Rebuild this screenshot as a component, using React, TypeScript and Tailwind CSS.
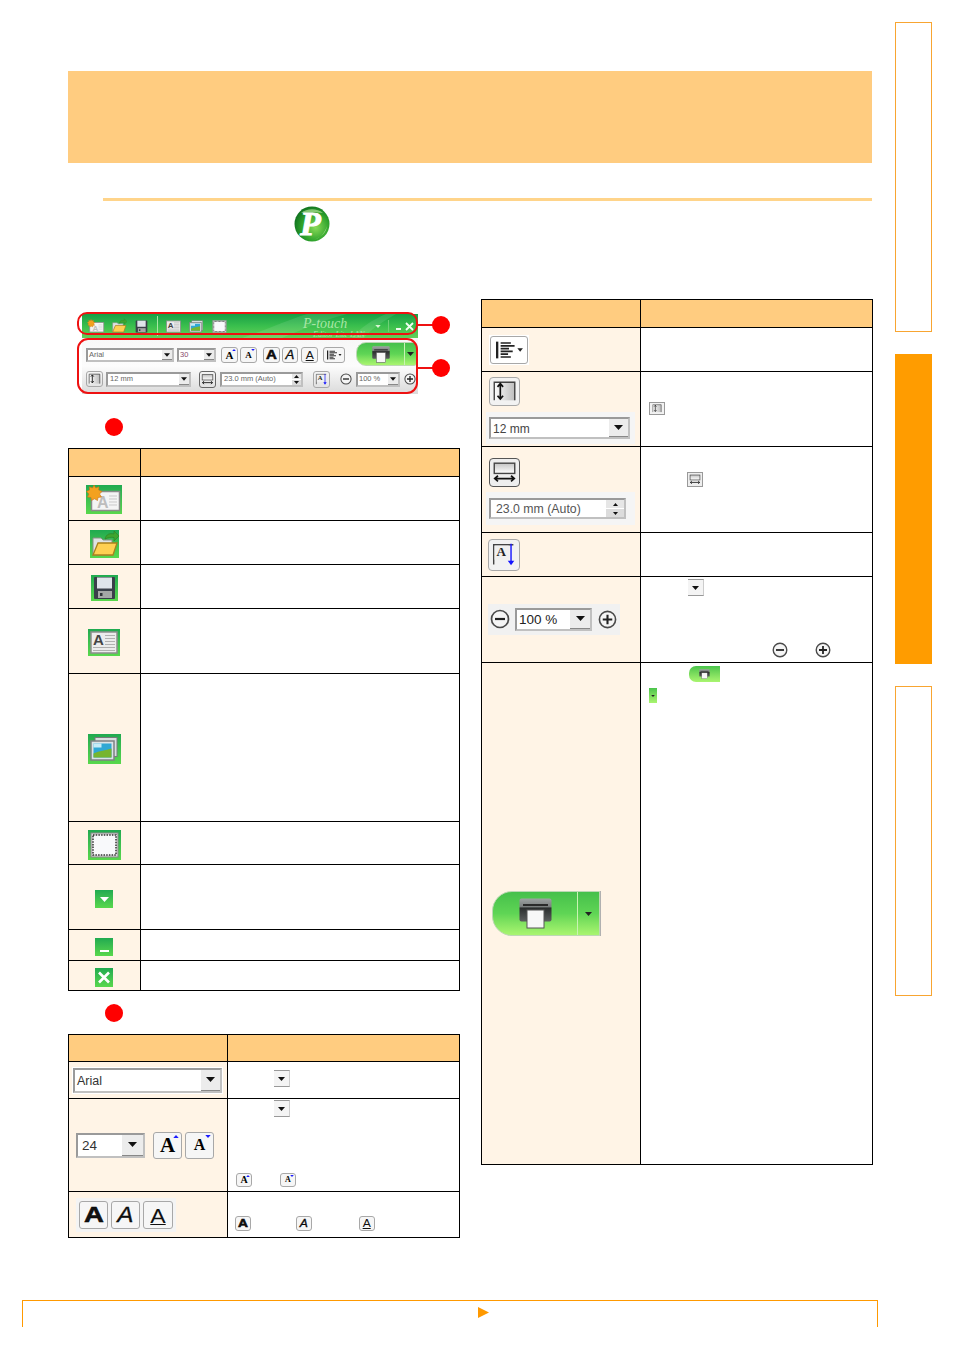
import type { ReactNode } from "react";

const tint = "bg-[#fff4e6]";
const head = "bg-[#ffcc80]";
const line = "border border-black";

function Tile({ className, children }: { className: string; children?: ReactNode }) {
  return (
    <div className={`bg-linear-to-b from-[#1faa50] to-[#58d84c] ${className}`}>{children}</div>
  );
}

function NewGlyph() {
  return (
    <svg viewBox="0 0 36 29" className="block h-full w-full">
      <rect x="5.500" y="6.500" width="28" height="19" fill="#f4f4f4" stroke="#8c8c8c" strokeWidth="1.500" />
      <text x="11" y="23" fontFamily="Liberation Sans" fontWeight="700" fontSize="16" fill="#bdbdbd">A</text>
      <path d="M23 11h8M23 14h8M23 17h8M23 20h8" stroke="#c9c9c9" />
      <polygon
        points="8,0 9.800,3 13,1.800 12.700,5 16,6.500 13.500,9 15.500,12 12,12.500 11.500,15.500 8.500,13.800 5.500,15.500 5,12.500 1.500,12 3,9 0.500,6.500 3.500,5 3.300,1.800 6.500,3"
        fill="#f3a11f"
        stroke="#c9701a"
        strokeWidth="0.600"
      />
    </svg>
  );
}

function OpenGlyph() {
  return (
    <svg viewBox="0 0 29 28" className="block h-full w-full">
      <path d="M3 25V8h8l2 2h9v15z" fill="#dfe3e3" stroke="#8a8f86" />
      <path d="M3 25L8 13h19l-4 12z" fill="#ffd052" stroke="#a9801d" strokeWidth="1.300" />
      <path d="M15 9c1-5 5-6 9-5V1l5 5-5 5V7.500c-3-.5-6 0-9 1.500z" fill="#3fa52e" stroke="#2b7d24" strokeWidth="0.600" />
    </svg>
  );
}

function SaveGlyph() {
  return (
    <svg viewBox="0 0 27 26" className="block h-full w-full">
      <rect x="3" y="2" width="21" height="22" rx="1" fill="#3a3f49" />
      <rect x="6" y="2.500" width="15" height="11" fill="#dfe4ea" />
      <rect x="7" y="16" width="14" height="7" fill="#a5a7a6" />
      <rect x="9" y="18" width="2.500" height="3" fill="#33363b" />
    </svg>
  );
}

function TextGlyph() {
  return (
    <svg viewBox="0 0 32 27" className="block h-full w-full">
      <rect x="3" y="3" width="26" height="21" fill="#ececec" stroke="#8d8d8d" strokeWidth="1.500" />
      <text x="5" y="16" fontFamily="Liberation Sans" fontWeight="700" fontSize="15" fill="#444">A</text>
      <path d="M17 6.500h10M17 9.500h10M17 12.500h10M17 15.500h10M5 18.500h22M5 21.500h22" stroke="#b0b0b0" />
    </svg>
  );
}

function ImageGlyph() {
  return (
    <svg viewBox="0 0 33 30" className="block h-full w-full">
      <rect x="7" y="3.500" width="22" height="19" fill="#d9dee0" stroke="#77797a" />
      <rect x="3" y="7" width="23" height="19" fill="#dbe3e6" stroke="#7e8182" strokeWidth="1.500" />
      <rect x="5.500" y="9.500" width="18" height="14" fill="#2fa8d4" />
      <rect x="5.500" y="9.500" width="8" height="4" fill="#c7ecf7" />
      <path d="M5.500 23.500v-4c6-3 12-3 18-5v9z" fill="#76b52f" />
    </svg>
  );
}

function FrameGlyph() {
  return (
    <svg viewBox="0 0 33 30" className="block h-full w-full">
      <rect x="3" y="3" width="27" height="24" fill="#d9d9d9" stroke="#8a8a8a" />
      <rect x="5" y="5" width="23" height="20" fill="#f8f9fb" stroke="#333" strokeWidth="1.500" strokeDasharray="1.500 1.200" />
    </svg>
  );
}

function Caret({ className = "w-[9px] h-[5px]", color = "#111" }: { className?: string; color?: string }) {
  return (
    <svg viewBox="0 0 9 5" className={`block ${className}`}>
      <polygon points="0,0 9,0 4.500,5" fill={color} />
    </svg>
  );
}

function DropButton({ className = "" }: { className?: string }) {
  return (
    <div
      className={`flex items-center justify-center border-t border-t-[#999] border-b border-b-[#999] border-r border-r-[#ccc] bg-[#f4f4f4] ${className}`}
    >
      <Caret className="h-[4px] w-[7px]" />
    </div>
  );
}

function Combo({
  text,
  className,
  textClass,
  btnClass,
  caret = "h-[5px] w-[9px]",
  spin,
}: {
  text: string;
  className: string;
  textClass: string;
  btnClass: string;
  caret?: string;
  spin?: boolean;
}) {
  return (
    <div className={`flex border-2 border-t-[#9a9a9a] border-l-[#9a9a9a] border-r-[#c0c0c0] border-b-[#c0c0c0] bg-white ${className}`}>
      <div className={`flex min-w-0 flex-1 items-center whitespace-nowrap ${textClass}`}>{text}</div>
      {spin ? (
        <div className={`flex flex-col ${btnClass}`}>
          <div className="flex flex-1 items-center justify-center bg-[#e6e6e6]">
            <Caret className="h-[3px] w-[5px] rotate-180" />
          </div>
          <div className="flex flex-1 items-center justify-center border-t border-t-white bg-[#dcdcdc]">
            <Caret className="h-[3px] w-[5px]" />
          </div>
        </div>
      ) : (
        <div className={`flex items-center justify-center border-b border-b-[#888] bg-[#ececec] ${btnClass}`}>
          <Caret className={caret} />
        </div>
      )}
    </div>
  );
}

function KeyBox({ className, children }: { className: string; children: ReactNode }) {
  return (
    <div className={`flex items-center justify-center overflow-hidden border border-[#a8a8a8] bg-[#f6f6f6] ${className}`}>
      {children}
    </div>
  );
}

function SizeA({ up, box, glyph, mark }: { up: boolean; box: string; glyph: string; mark: string }) {
  return (
    <KeyBox className={`relative rounded-[3px] ${box}`}>
      <span className={`font-['Liberation_Serif',serif] font-bold leading-none text-black ${glyph}`}>A</span>
      <span className={`absolute top-[8%] right-[8%] ${up ? "rotate-180" : ""}`}>
        <Caret className={mark} color="#1c1cff" />
      </span>
    </KeyBox>
  );
}

function StyleA({ variant, box, glyph }: { variant: "bold" | "italic" | "under"; box: string; glyph: string }) {
  const cls =
    variant === "bold"
      ? "font-bold scale-x-[1.25] [-webkit-text-stroke:0.5px_black]"
      : variant === "italic"
        ? "italic scale-x-[1.1] [-webkit-text-stroke:0.3px_black]"
        : "underline decoration-1 underline-offset-[1px] scale-x-[1.1]";
  return (
    <KeyBox className={`rounded-[3px] ${box}`}>
      <span className={`inline-block leading-none text-[#111] ${cls} ${glyph}`}>A</span>
    </KeyBox>
  );
}

function AlignGlyph() {
  return (
    <svg viewBox="0 0 38 28" className="block h-full w-full">
      <rect x="5" y="5" width="2.500" height="18" fill="#222" />
      <path d="M10 6.500h11M10 9.500h15M10 12.500h9M10 15.500h13M10 18.500h8M10 21.500h11" stroke="#222" strokeWidth="1.800" />
      <polygon points="28,12 34,12 31,16" fill="#222" />
    </svg>
  );
}

function HeightGlyph() {
  return (
    <svg viewBox="0 0 31 29" className="block h-full w-full">
      <defs>
        <linearGradient id="hg" x1="0" x2="1" y1="0" y2="0">
          <stop offset="0" stopColor="#ffffff" />
          <stop offset="1" stopColor="#bcbcbc" />
        </linearGradient>
      </defs>
      <rect x="4" y="4" width="23" height="20" fill="url(#hg)" />
      <path d="M4.500 24V4.500h22V24" fill="none" stroke="#444" strokeWidth="1.500" />
      <path d="M11 6.500v15.500M8 9.500l3-3.500 3 3.500M8 19l3 3.500 3-3.500" fill="none" stroke="#111" strokeWidth="1.800" />
    </svg>
  );
}

function WidthGlyph() {
  return (
    <svg viewBox="0 0 31 29" className="block h-full w-full">
      <defs>
        <linearGradient id="wg" x1="0" x2="0" y1="0" y2="1">
          <stop offset="0" stopColor="#c4c4c4" />
          <stop offset="1" stopColor="#ffffff" />
        </linearGradient>
      </defs>
      <rect x="4.500" y="4.500" width="22" height="11" fill="url(#wg)" stroke="#444" strokeWidth="1.500" />
      <path d="M5.500 21h20M8.500 18l-3.500 3 3.500 3M22.500 18l3.500 3-3.500 3" fill="none" stroke="#111" strokeWidth="1.800" />
    </svg>
  );
}

function VerticalGlyph() {
  return (
    <svg viewBox="0 0 32 32" className="block h-full w-full">
      <path d="M5 26V5h21" fill="none" stroke="#444" strokeWidth="1.500" />
      <rect x="6" y="6" width="15" height="15" fill="#f0f0f0" />
      <text x="8" y="17" fontFamily="Liberation Serif" fontWeight="700" fontSize="14" fill="#222">A</text>
      <path d="M23.500 4v20" stroke="#1414ff" strokeWidth="1.500" />
      <polygon points="20,22 27,22 23.500,27" fill="#1414ff" />
    </svg>
  );
}

function ZoomCircle({ plus, className }: { plus?: boolean; className: string }) {
  return (
    <svg viewBox="0 0 20 20" className={`block ${className}`}>
      <circle cx="10" cy="10" r="8.500" fill="#f5f5f5" stroke="#4a4a4a" strokeWidth="1.700" />
      <path d={plus ? "M5 10h10M10 5v10" : "M5 10h10"} stroke="#222" strokeWidth="2.200" />
    </svg>
  );
}

function Printer({ className }: { className: string }) {
  return (
    <svg viewBox="0 0 33 31" className={`block ${className}`}>
      <defs>
        <linearGradient id="pr" x1="0" x2="0" y1="0" y2="1">
          <stop offset="0" stopColor="#9ea3a3" />
          <stop offset="0.350" stopColor="#7a7e7e" />
          <stop offset="0.420" stopColor="#2b2e2e" />
          <stop offset="1" stopColor="#5b5e5e" />
        </linearGradient>
      </defs>
      <rect x="0.500" y="0.500" width="32" height="23" rx="2" fill="url(#pr)" />
      <rect x="4" y="6" width="25" height="2" fill="#2a2a2a" />
      <rect x="8" y="12" width="17" height="18" fill="#f7f7f7" stroke="#555" />
    </svg>
  );
}

function PrintButton({
  className,
  round,
  sideClass,
  printer,
}: {
  className: string;
  round: string;
  sideClass: string;
  printer: string;
}) {
  return (
    <div className={`flex overflow-hidden border border-[#bcd8b4] bg-linear-to-b from-[#45c04b] via-[#5fd555] to-[#a9f570] ${round} ${className}`}>
      <div className="flex flex-1 items-center justify-center">
        <Printer className={printer} />
      </div>
      <div className={`flex items-center justify-center border-l border-l-[#c9f3b3] ${sideClass}`}>
        <Caret className="h-[4px] w-[7px]" color="#222" />
      </div>
    </div>
  );
}

function Logo() {
  return (
    <svg viewBox="0 0 36 36" className="block h-[36px] w-[36px]">
      <defs>
        <radialGradient id="lg" cx="0.6" cy="0.6" r="0.65">
          <stop offset="0" stopColor="#8ada58" />
          <stop offset="0.6" stopColor="#2ea32c" />
          <stop offset="1" stopColor="#0e6f1f" />
        </radialGradient>
      </defs>
      <circle cx="18" cy="18" r="17.500" fill="url(#lg)" />
      <path d="M7 7c6-5 16-5 22 0-6-1-15-1-22 0z" fill="#c8eea8" opacity="0.6" />
      <path d="M20 34c6-2 11-7 13-14-1 7-6 11-13 14z" fill="#d6f5b8" opacity="0.7" />
      <text
        x="6"
        y="29"
        fontFamily="Liberation Serif"
        fontStyle="italic"
        fontWeight="700"
        fontSize="34"
        fill="#ffffff"
        stroke="#ffffff"
        strokeWidth="1"
      >
        P
      </text>
    </svg>
  );
}

function Toolbar() {
  const small = "text-[7.5px] text-[#666]";
  const tiny = "h-[4px] w-[6px]";
  return (
    <div className="relative ml-[9px] h-[82px] w-[341px]">
      <div className="ml-[5px] flex h-[82px] w-[336px] flex-col pt-[2px]">
        <div className="relative flex h-[24px] items-center overflow-hidden bg-linear-to-b from-[#159f46] via-[#39bf4d] to-[#62cf59] pl-[5px]">
          <svg viewBox="0 0 336 24" className="absolute inset-0 h-full w-full">
            <path d="M160 24C190 14 205 6 225 0h40c-30 8-50 18-65 24z" fill="#ffffff" opacity="0.1" />
            <path d="M270 24c8-10 20-18 34-24h10c-14 8-26 16-32 24z" fill="#ffffff" opacity="0.1" />
          </svg>
          <div className="relative h-[15px] w-[18px]"><NewGlyph /></div>
          <div className="relative ml-[6px] h-[16px] w-[16px]"><OpenGlyph /></div>
          <div className="relative ml-[7px] h-[15px] w-[15px]"><SaveGlyph /></div>
          <div className="relative ml-[8px] h-[20px] w-px bg-[#a9e6a5]" />
          <div className="relative ml-[7px] h-[15px] w-[17px]"><TextGlyph /></div>
          <div className="relative ml-[6px] h-[15px] w-[17px]"><ImageGlyph /></div>
          <div className="relative ml-[6px] h-[15px] w-[17px]"><FrameGlyph /></div>
          <div className="relative ml-[75px] mt-[3px] w-[60px] font-['Liberation_Serif',serif] text-[14px] leading-[13px] whitespace-nowrap text-[#a9e6a5] italic">
            P-touch
            <div className="ml-[10px] text-[8px] leading-[9px]">Editor Lite LAN</div>
          </div>
          <Caret className="relative ml-[12px] h-[3px] w-[6px]" color="#d8f5d4" />
          <div className="relative ml-[7px] h-[12px] w-px bg-[#6fd077]" />
          <div className="relative ml-[7px] mt-[5px] h-[2px] w-[5px] bg-[#eefbee]" />
          <svg viewBox="0 0 9 9" className="relative ml-[4px] h-[9px] w-[9px]">
            <path d="M1 1l7 7M8 1l-7 7" stroke="#f2fff2" strokeWidth="1.800" />
          </svg>
        </div>
        <div className="flex flex-1 flex-col bg-linear-to-b from-[#f7f7f7] via-[#fcfcfc] to-[#dadada] pl-[4px]">
          <div className="mt-[5px] flex h-[24px] items-center">
            <Combo text="Arial" className="h-[14px] w-[88px]" textClass={`${small} pl-[1px]`} btnClass="w-[10px]" caret={tiny} />
            <Combo text="30" className="ml-[3px] h-[14px] w-[39px]" textClass="pl-[1px] text-[7.5px] text-[#8a4a6a]" btnClass="w-[10px]" caret={tiny} />
            <SizeA up box="ml-[5px] h-[16px] w-[17px]" glyph="text-[11px]" mark="h-[2px] w-[4px]" />
            <SizeA up={false} box="ml-[2px] h-[16px] w-[17px]" glyph="text-[9px]" mark="h-[2px] w-[4px]" />
            <StyleA variant="bold" box="ml-[6px] h-[16px] w-[17px]" glyph="text-[12px]" />
            <StyleA variant="italic" box="ml-[2px] h-[16px] w-[16px]" glyph="text-[12px]" />
            <StyleA variant="under" box="ml-[3px] h-[16px] w-[17px]" glyph="text-[11px]" />
            <div className="ml-[5px] h-[16px] w-[22px] rounded-[3px] border border-[#a8a8a8] bg-[#f6f6f6]"><AlignGlyph /></div>
            <PrintButton
              className="-mt-[1px] ml-[11px] h-[24px] w-[61px] self-start"
              round="rounded-l-[10px] rounded-r-[3px]"
              sideClass="w-[12px]"
              printer="h-[17px] w-[18px]"
            />
          </div>
          <div className="mt-[4px] flex h-[16px] items-center">
            <div className="h-[16px] w-[17px] rounded-[3px] border border-[#a8a8a8]"><HeightGlyph /></div>
            <Combo text="12 mm" className="ml-[3px] h-[15px] w-[85px]" textClass={`${small} pl-[2px]`} btnClass="w-[10px]" caret={tiny} />
            <div className="ml-[8px] h-[17px] w-[17px] rounded-[3px] border border-[#666]"><WidthGlyph /></div>
            <Combo text="23.0 mm (Auto)" className="ml-[4px] h-[15px] w-[83px]" textClass={`${small} pl-[2px]`} btnClass="w-[9px]" spin />
            <div className="ml-[10px] h-[17px] w-[17px] rounded-[3px] border border-[#a8a8a8]"><VerticalGlyph /></div>
            <ZoomCircle className="ml-[10px] h-[12px] w-[12px]" />
            <Combo text="100 %" className="ml-[4px] h-[15px] w-[44px]" textClass={`${small} pl-[1px]`} btnClass="w-[10px]" caret={tiny} />
            <ZoomCircle plus className="ml-[4px] h-[12px] w-[12px]" />
          </div>
        </div>
      </div>
      <div className="absolute top-0 left-0 h-[23px] w-[341px] rounded-[10px] border-2 border-[#ee1111]" />
      <div className="absolute top-[26px] left-0 h-[56px] w-[341px] rounded-[11px] border-2 border-[#ee1111]" />
      <div className="absolute top-[12px] left-[341px] h-[2px] w-[16px] bg-[#ee1111]" />
      <div className="absolute top-[55px] left-[341px] h-[2px] w-[16px] bg-[#ee1111]" />
      <div className="absolute top-[4px] left-[355px] h-[18px] w-[18px] rounded-full bg-[#ff0000]" />
      <div className="absolute top-[47px] left-[355px] h-[18px] w-[18px] rounded-full bg-[#ff0000]" />
    </div>
  );
}

function RedDot({ className }: { className: string }) {
  return <div className={`ml-[37px] h-[18px] w-[18px] rounded-full bg-[#ff0000] ${className}`} />;
}

function IconRow({ height, shift = "pt-[2px] pr-[1px]", children }: { height: string; shift?: string; children: ReactNode }) {
  return (
    <tr className={height}>
      <td className={`${line} ${tint} p-0`}>
        <div className={`flex justify-center ${shift}`}>{children}</div>
      </td>
      <td className={`${line} bg-white p-0`} />
    </tr>
  );
}

function HeadRow({ height }: { height: string }) {
  return (
    <tr className={height}>
      <td className={`${line} ${head} p-0`} />
      <td className={`${line} ${head} p-0`} />
    </tr>
  );
}

function ToolbarTable() {
  const low = "pt-[4px] pr-[1px]";
  return (
    <table className="mt-[12px] w-[391px] table-fixed border-collapse">
      <colgroup>
        <col className="w-[72px]" />
        <col className="w-[319px]" />
      </colgroup>
      <tbody>
        <HeadRow height="h-[28px]" />
        <IconRow height="h-[44px]"><Tile className="h-[29px] w-[36px]"><NewGlyph /></Tile></IconRow>
        <IconRow height="h-[44px]"><Tile className="h-[28px] w-[29px]"><OpenGlyph /></Tile></IconRow>
        <IconRow height="h-[44px]"><Tile className="h-[26px] w-[27px]"><SaveGlyph /></Tile></IconRow>
        <IconRow height="h-[65px]"><Tile className="h-[27px] w-[32px]"><TextGlyph /></Tile></IconRow>
        <IconRow height="h-[148px]"><Tile className="h-[30px] w-[33px]"><ImageGlyph /></Tile></IconRow>
        <IconRow height="h-[43px]" shift={low}><Tile className="h-[30px] w-[33px]"><FrameGlyph /></Tile></IconRow>
        <IconRow height="h-[65px]" shift={low}>
          <Tile className="flex h-[18px] w-[18px] items-center justify-center">
            <Caret className="h-[5px] w-[9px]" color="#fff" />
          </Tile>
        </IconRow>
        <IconRow height="h-[31px]" shift={low}>
          <Tile className="flex h-[18px] w-[18px] items-end justify-center pb-[4px]">
            <div className="h-[2px] w-[9px] bg-white" />
          </Tile>
        </IconRow>
        <IconRow height="h-[30px]" shift={low}>
          <Tile className="h-[19px] w-[18px]">
            <svg viewBox="0 0 18 19" className="block h-full w-full">
              <path d="M4 4.500l10 10M14 4.500l-10 10" stroke="#fff" strokeWidth="2.600" />
            </svg>
          </Tile>
        </IconRow>
      </tbody>
    </table>
  );
}

function FontTable() {
  return (
    <table className="mt-[12px] w-[391px] table-fixed border-collapse">
      <colgroup>
        <col className="w-[159px]" />
        <col className="w-[232px]" />
      </colgroup>
      <tbody>
        <HeadRow height="h-[27px]" />
        <tr className="h-[37px]">
          <td className={`${line} ${tint} p-0`}>
            <div className="ml-[3px] w-[151px] bg-white p-[1px]">
              <Combo text="Arial" className="h-[25px] w-[149px]" textClass="pt-[2px] pl-[2px] text-[12.5px] text-[#333]" btnClass="w-[19px]" />
            </div>
          </td>
          <td className={`${line} bg-white p-0 align-top`}>
            <DropButton className="mt-[8px] ml-[46px] h-[17px] w-[16px]" />
          </td>
        </tr>
        <tr className="h-[93px]">
          <td className={`${line} ${tint} p-0`}>
            <div className="ml-[7px] flex items-center">
              <Combo text="24" className="h-[25px] w-[69px]" textClass="pt-[2px] pl-[4px] text-[13.5px] text-[#333]" btnClass="w-[21px]" />
              <SizeA up box="ml-[8px] h-[27px] w-[29px]" glyph="text-[21px]" mark="h-[3px] w-[6px]" />
              <SizeA up={false} box="ml-[3px] h-[27px] w-[29px]" glyph="text-[16px]" mark="h-[3px] w-[6px]" />
            </div>
          </td>
          <td className={`${line} bg-white p-0 align-top`}>
            <DropButton className="mt-[1px] ml-[46px] h-[17px] w-[16px]" />
            <div className="mt-[56px] ml-[8px] flex">
              <SizeA up box="h-[14px] w-[16px] rounded-[1px]" glyph="text-[10px]" mark="h-[2px] w-[4px]" />
              <SizeA up={false} box="ml-[28px] h-[14px] w-[16px] rounded-[1px]" glyph="text-[8px]" mark="h-[2px] w-[4px]" />
            </div>
          </td>
        </tr>
        <tr className="h-[46px]">
          <td className={`${line} ${tint} p-0`}>
            <div className="mt-[1px] ml-[7px] flex w-[100px] gap-[3px] bg-[#f4f4f4] py-[3px] pl-[3px]">
              <StyleA variant="bold" box="h-[28px] w-[29px]" glyph="text-[22px]" />
              <StyleA variant="italic" box="h-[28px] w-[29px]" glyph="text-[22px]" />
              <StyleA variant="under" box="h-[28px] w-[30px]" glyph="text-[21px]" />
            </div>
          </td>
          <td className={`${line} bg-white p-0 align-top`}>
            <div className="mt-[24px] ml-[7px] flex">
              <StyleA variant="bold" box="h-[15px] w-[16px]" glyph="text-[11px]" />
              <StyleA variant="italic" box="ml-[45px] h-[15px] w-[16px]" glyph="text-[11px]" />
              <StyleA variant="under" box="ml-[47px] h-[15px] w-[16px]" glyph="text-[11px]" />
            </div>
          </td>
        </tr>
      </tbody>
    </table>
  );
}

function OptionsTable() {
  return (
    <table className="w-[391px] table-fixed border-collapse">
      <colgroup>
        <col className="w-[159px]" />
        <col className="w-[232px]" />
      </colgroup>
      <tbody>
        <HeadRow height="h-[28px]" />
        <tr className="h-[44px]">
          <td className={`${line} ${tint} p-0`}>
            <div className="ml-[7px] h-[30px] w-[40px] bg-white p-[1px]">
              <div className="h-[28px] w-[38px] rounded-[3px] border border-[#a8a8a8]"><AlignGlyph /></div>
            </div>
          </td>
          <td className={`${line} bg-white p-0`} />
        </tr>
        <tr className="h-[75px]">
          <td className={`${line} ${tint} p-0 align-top`}>
            <div className="mt-[5px] ml-[7px] h-[29px] w-[31px] rounded-[4px] border border-[#a8a8a8] bg-[#f2f2f2]"><HeightGlyph /></div>
            <div className="mt-[6px] ml-[4px] w-[149px] bg-[#f5f5f5] px-[3px] py-[5px]">
              <Combo text="12 mm" className="h-[22px] w-[141px]" textClass="pt-[2px] pl-[2px] text-[12px] text-[#444]" btnClass="w-[19px]" />
            </div>
          </td>
          <td className={`${line} bg-white p-0 align-top`}>
            <div className="mt-[30px] ml-[8px] h-[13px] w-[16px] border border-[#999] bg-[#f2f2f2]"><HeightGlyph /></div>
          </td>
        </tr>
        <tr className="h-[86px]">
          <td className={`${line} ${tint} p-0 align-top`}>
            <div className="mt-[11px] ml-[7px] h-[29px] w-[31px] rounded-[4px] border border-[#555] bg-[#eee]"><WidthGlyph /></div>
            <div className="mt-[5px] ml-[4px] w-[149px] bg-[#f5f5f5] px-[3px] py-[6px]">
              <Combo text="23.0 mm (Auto)" className="h-[21px] w-[137px]" textClass="pt-[2px] pl-[5px] text-[12.3px] text-[#555]" btnClass="w-[18px]" spin />
            </div>
          </td>
          <td className={`${line} bg-white p-0 align-top`}>
            <div className="mt-[25px] ml-[46px] h-[15px] w-[16px] border border-[#999] bg-[#eee]"><WidthGlyph /></div>
          </td>
        </tr>
        <tr className="h-[44px]">
          <td className={`${line} ${tint} p-0`}>
            <div className="ml-[6px] h-[32px] w-[32px] rounded-[4px] border border-[#a8a8a8] bg-[#f2f2f2]"><VerticalGlyph /></div>
          </td>
          <td className={`${line} bg-white p-0`} />
        </tr>
        <tr className="h-[86px]">
          <td className={`${line} ${tint} p-0`}>
            <div className="mb-[1px] ml-[6px] flex h-[31px] w-[132px] items-center bg-[#f1f1f1] pl-[2px]">
              <ZoomCircle className="h-[20px] w-[20px]" />
              <Combo text="100 %" className="ml-[5px] h-[23px] w-[77px]" textClass="pt-[2px] pl-[2px] text-[13.5px] text-[#222]" btnClass="w-[20px]" />
              <ZoomCircle plus className="ml-[6px] h-[19px] w-[19px]" />
            </div>
          </td>
          <td className={`${line} bg-white p-0 align-top`}>
            <DropButton className="mt-[2px] ml-[47px] h-[17px] w-[16px]" />
            <div className="mt-[46px] ml-[131px] flex">
              <ZoomCircle className="h-[16px] w-[16px]" />
              <ZoomCircle plus className="ml-[27px] h-[16px] w-[16px]" />
            </div>
          </td>
        </tr>
        <tr className="h-[502px]">
          <td className={`${line} ${tint} p-0`}>
            <div className="ml-[10px] flex h-[45px] w-[109px]">
              <PrintButton
                className="h-[45px] w-[108px]"
                round="rounded-l-[20px]"
                sideClass="w-[22px]"
                printer="h-[31px] w-[33px]"
              />
              <div className="w-px bg-[#b0b0b0]" />
            </div>
          </td>
          <td className={`${line} bg-white p-0 align-top`}>
            <div className="mt-[3px] ml-[48px] flex h-[16px] w-[31px] items-center justify-center rounded-l-[7px] bg-linear-to-b from-[#49c44c] to-[#a9f570]">
              <Printer className="h-[10px] w-[11px]" />
            </div>
            <div className="mt-[6px] ml-[8px] flex h-[15px] w-[8px] items-center justify-center bg-linear-to-b from-[#49c44c] to-[#a9f570]">
              <Caret className="h-[2px] w-[4px]" color="#222" />
            </div>
          </td>
        </tr>
      </tbody>
    </table>
  );
}

export default function App() {
  return (
    <div className="flex min-h-[1350px] w-[954px] flex-col bg-white font-['Liberation_Sans',Arial,sans-serif]">
      <div className="flex">
        <main className="ml-[68px] w-[805px] pt-[71px]">
          <div className={`h-[92px] w-[804px] ${head}`} />
          <div className="mt-[35px] ml-[35px] h-[3px] w-[769px] bg-[#ffd48a]" />
          <div className="mt-[5px] ml-[226px]">
            <Logo />
          </div>
          <div className="mt-[57px] flex gap-[21px]">
            <section className="w-[392px] pt-[13px]">
              <Toolbar />
              <RedDot className="mt-[24px]" />
              <ToolbarTable />
              <RedDot className="mt-[13px]" />
              <FontTable />
            </section>
            <section className="w-[392px]">
              <OptionsTable />
            </section>
          </div>
        </main>
        <aside className="ml-[22px] flex w-[37px] flex-col gap-[22px] pt-[22px]">
          <div className="h-[310px] border border-[#f8a531] bg-white" />
          <div className="h-[310px] bg-[#ff9c00]" />
          <div className="h-[310px] border border-[#f8a531] bg-white" />
        </aside>
      </div>
      <footer className="mt-[62px] ml-[22px] h-[27px] w-[856px] border-x border-t border-[#ff9900] pt-[6px] pl-[455px]">
        <svg viewBox="0 0 11 11" className="block h-[11px] w-[11px]">
          <polygon points="0,0 11,5.500 0,11" fill="#ff9900" />
        </svg>
      </footer>
    </div>
  );
}
